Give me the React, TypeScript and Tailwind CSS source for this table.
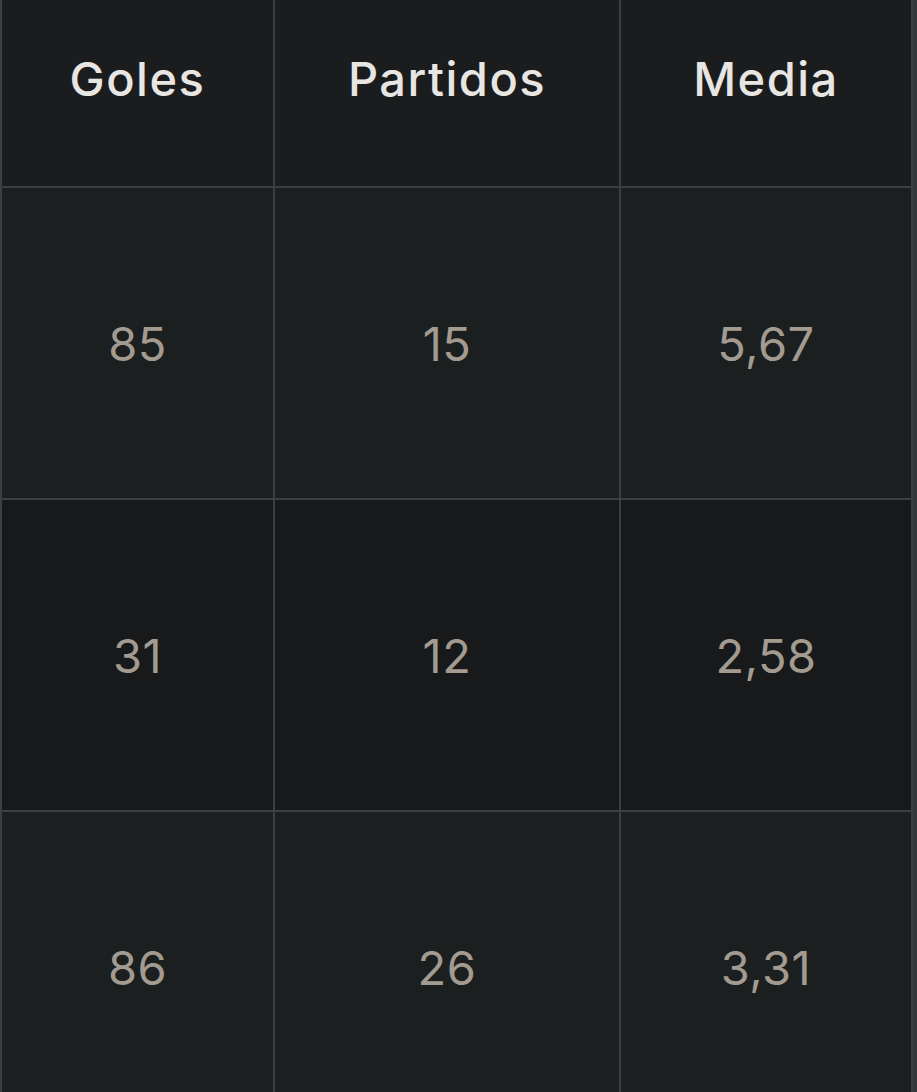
import React from 'react'

const rows = [
  { goles: '85', partidos: '15', media: '5,67', bg: 'bg-[#1c1f20]' },
  { goles: '31', partidos: '12', media: '2,58', bg: 'bg-[#18191b]' },
  { goles: '86', partidos: '26', media: '3,31', bg: 'bg-[#1c1f20]' },
]

const App: React.FC = () => {
  return (
    <div className="flex min-h-[1092px] w-[917px] overflow-hidden bg-[#1c1f20] font-['Inter',sans-serif]">
      <table className="w-[911px] border-collapse table-fixed self-start">
        <colgroup>
          <col className="w-[273px]" />
          <col className="w-[346px]" />
          <col className="w-[292px]" />
        </colgroup>
        {/* Header */}
        <thead>
          <tr className="bg-[#1b1c1e]">
            {['Goles', 'Partidos', 'Media'].map(h => (
              <th
                key={h}
                className="h-[187px] border-2 border-t-0 border-[#3a3f42] pb-[30px] text-center text-[47px] font-medium leading-none tracking-[1.5px] text-[#e8e6e3]"
              >
                {h}
              </th>
            ))}
          </tr>
        </thead>
        {/* Body */}
        <tbody>
          {rows.map((r, i) => (
            <tr key={i} className={r.bg}>
              {[r.goles, r.partidos, r.media].map((v, j) => (
                <td
                  key={j}
                  className="h-[312px] border-2 border-[#3a3f42] text-center text-[47px] font-normal leading-none tracking-[0.5px] text-[#a39b90]"
                >
                  {v}
                </td>
              ))}
            </tr>
          ))}
        </tbody>
      </table>
      <div className="w-[6px] bg-[#343a3c]" />
    </div>
  )
}

export default App
